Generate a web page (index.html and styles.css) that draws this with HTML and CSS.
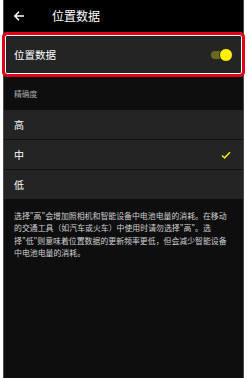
FILE: index.html
```html
<!DOCTYPE html>
<html lang="zh-CN">
<head>
<meta charset="utf-8">
<link rel="stylesheet" href="styles.css">
</head>
<body>
<div class="phone">
  <header class="topbar">
    <svg class="back" width="12" height="12" viewBox="0 0 12 12"><path d="M11 6H2M6 1.8L1.8 6 6 10.2" fill="none" stroke="#fff" stroke-width="1.5"/></svg>
    <span class="title">位置数据</span>
  </header>
  <section class="switch-wrap">
    <div class="switch-row">
      <span class="row-label">位置数据</span>
      <span class="toggle"><span class="track"></span><span class="thumb"></span></span>
    </div>
    <div class="highlight"></div>
  </section>
  <div class="group-label">精确度</div>
  <ul class="options">
    <li class="opt">高</li>
    <li class="opt">中<svg class="check" width="10" height="8" viewBox="0 0 10 8"><path d="M1 4.5L3.6 6.8 9 1.2" fill="none" stroke="#f2e500" stroke-width="1.6"/></svg></li>
    <li class="opt">低</li>
  </ul>
  <p class="note">选择"高"会增加照相机和智能设备中电池电量的消耗。在移动的交通工具（如汽车或火车）中使用时请勿选择"高"。选择"低"则意味着位置数据的更新频率更低，但会减少智能设备中电池电量的消耗。</p>
</div>
</body>
</html>
```
FILE: styles.css
```css
html, body { margin: 0; padding: 0; background: #fff; }
body { font-family: "Noto Sans CJK SC", "Noto Sans", sans-serif; }
.phone {
  margin: 0 3px;
  width: 239px;
  height: 378px;
  background: #0e0e0e;
  border-left: 1px solid #4a4a4a;
  border-right: 1px solid #4a4a4a;
  overflow: visible;
}
.topbar {
  height: 32px;
  background: #000;
  display: flex;
  align-items: center;
  color: #fff;
}
.back { margin-left: 9px; }
.title { margin-left: 27px; font-size: 12px; line-height: 1; }
.switch-wrap { position: relative; height: 45px; background: #0e0e0e; }
.switch-row {
  height: 45px;
  background: #242424;
  display: flex;
  align-items: center;
  justify-content: space-between;
  padding: 0 10px 0 10px;
  box-sizing: border-box;
}
.row-label { color: #fff; font-size: 10.5px; }
.toggle { position: relative; width: 24px; height: 14px; }
.track { position: absolute; left: 2px; top: 3px; width: 17px; height: 8px; border-radius: 4px; background: #6a6a1e; }
.thumb { position: absolute; right: 0; top: 0; width: 12px; height: 12px; border-radius: 50%; background: #fff000; border: 1px solid #222; }
.highlight {
  position: absolute;
  left: -2px; right: -2px; top: 0; bottom: 0;
  border: 3px solid #e3001b;
  border-radius: 5px;
  box-shadow: inset 0 0 0 1px #fff;
}
.group-label {
  height: 33px;
  display: flex;
  align-items: center;
  padding-left: 10px;
  color: #a8a8a8;
  font-size: 7.8px;
}
.options { list-style: none; margin: 0; padding: 0; }
.opt {
  height: 29px;
  background: #242424;
  border-bottom: 1px solid #111;
  display: flex;
  align-items: center;
  justify-content: space-between;
  padding: 0 12px 0 10px;
  color: #fff;
  font-size: 10px;
}
.opt:last-child { border-bottom: none; }
.note {
  margin: 0;
  padding: 11px 10px 0 10px;
  color: #d0d0d0;
  font-size: 7.9px;
  line-height: 12.3px;
}
```
